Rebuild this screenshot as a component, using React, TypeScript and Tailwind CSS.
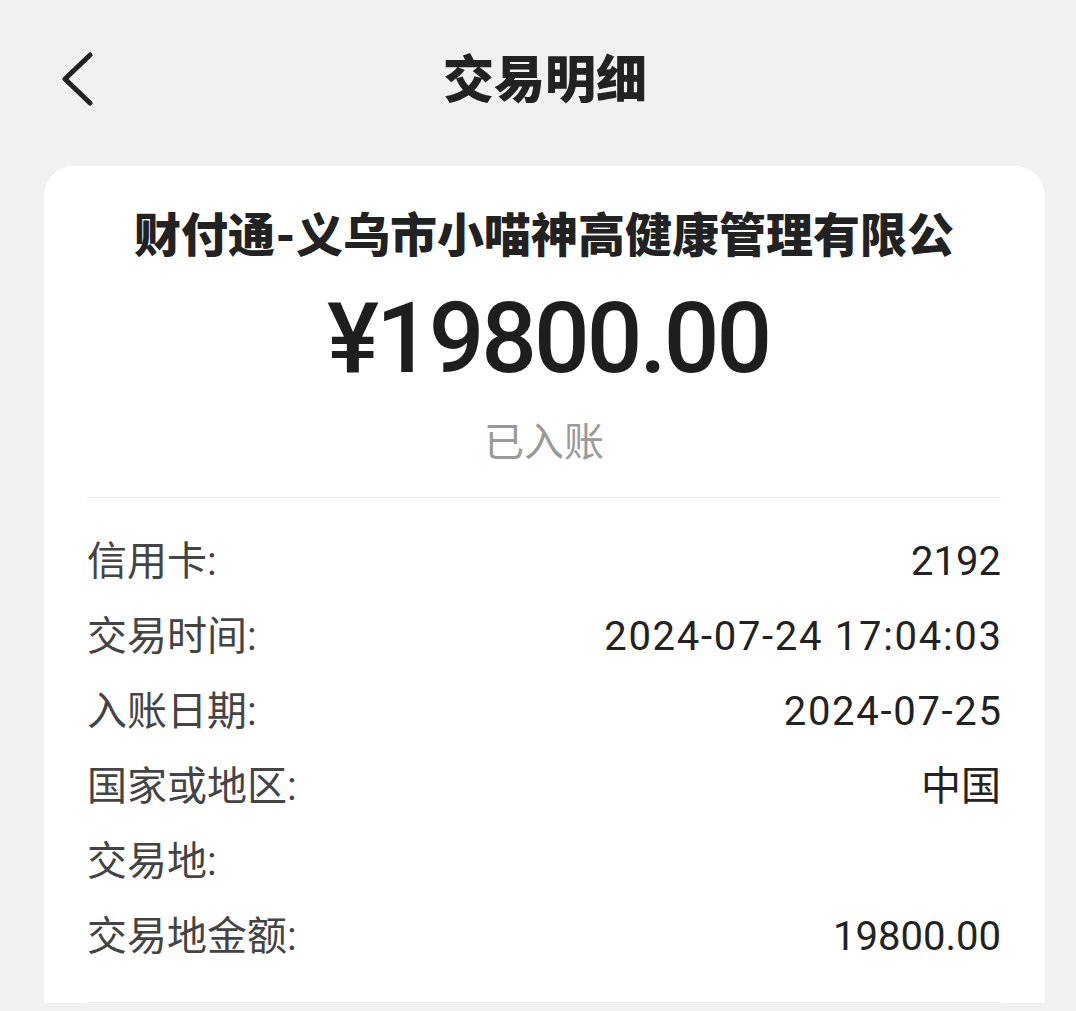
const rows: { label: string; value: string; wide?: boolean }[] = [
  { label: '信用卡:', value: '2192' },
  { label: '交易时间:', value: '2024-07-24 17:04:03', wide: true },
  { label: '入账日期:', value: '2024-07-25', wide: true },
  { label: '国家或地区:', value: '中国' },
  { label: '交易地:', value: '' },
  { label: '交易地金额:', value: '19800.00' },
];

const font = "font-['Roboto','Noto_Sans_CJK_SC',sans-serif]";

export default function App() {
  return (
    <div className={`w-[1076px] h-[1011px] overflow-hidden bg-[#f1f1f1] ${font}`}>
      {/* HEADER */}
      <div className="h-[166px] grid grid-cols-[1fr_auto_1fr] items-center pb-[6px]">
        <div className="pl-[60px] flex items-center">
          <svg width="36" height="56" viewBox="0 0 36 56" fill="none">
            <path
              d="M30 3 L5 27 L30 51"
              stroke="#222"
              strokeWidth="5"
              strokeLinecap="round"
              strokeLinejoin="round"
            />
          </svg>
        </div>
        <h1 className="ml-[14px] text-[51px] leading-none font-black text-[#222] tracking-[0px]">
          交易明细
        </h1>
        <div />
      </div>

      {/* CARD */}
      <div className="ml-[44px] w-[1001px] bg-white rounded-t-[30px] pt-[40px] pl-[43px] pr-[44px]">
        <p className="text-center text-[47px] leading-[60px] font-black text-[#222]">
          财付通-义乌市小喵神高健康管理有限公
        </p>
        <p className="mt-[18px] ml-[8px] text-center text-[98px] leading-[110px] font-medium text-[#1e1e1e] tracking-[-3px]">
          ¥19800.00
        </p>
        <p className="mt-[24px] text-center text-[40px] leading-[50px] text-[#9a9a9a]">
          已入账
        </p>

        <div className="mt-[29px] border-t border-b border-[#ececec] pt-[26px] pb-[28px]">
          {rows.map((row) => (
            <div
              key={row.label}
              className="h-[75px] flex items-center justify-between"
            >
              <span className="text-[40px] text-[#444]">{row.label}</span>
              <span
                className={
                  row.wide
                    ? 'text-[40px] text-[#222] tracking-[1.7px] -mr-[1.7px]'
                    : 'text-[40px] text-[#222]'
                }
              >
                {row.value}
              </span>
            </div>
          ))}
        </div>
      </div>
    </div>
  );
}
